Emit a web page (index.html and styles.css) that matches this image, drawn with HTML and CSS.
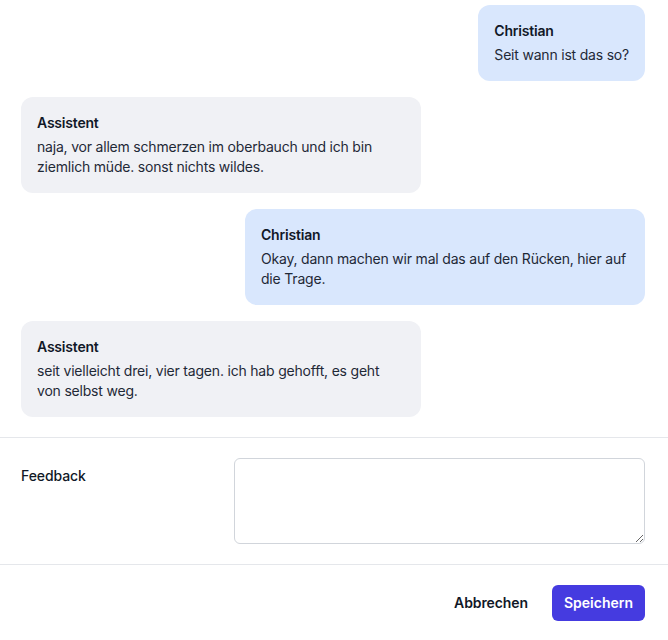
FILE: index.html
```html
<!DOCTYPE html>
<html lang="de">
<head>
<meta charset="utf-8">
<title>Feedback</title>
<link rel="stylesheet" href="styles.css">
</head>
<body>
<div class="panel">
  <div class="chat">
    <div class="msg msg-user">
      <div class="name">Christian</div>
      <div class="text">Seit wann ist das so?</div>
    </div>
    <div class="msg msg-bot">
      <div class="name">Assistent</div>
      <div class="text">naja, vor allem schmerzen im oberbauch und ich bin ziemlich müde. sonst nichts wildes.</div>
    </div>
    <div class="msg msg-user">
      <div class="name">Christian</div>
      <div class="text">Okay, dann machen wir mal das auf den Rücken, hier auf die Trage.</div>
    </div>
    <div class="msg msg-bot">
      <div class="name">Assistent</div>
      <div class="text">seit vielleicht drei, vier tagen. ich hab gehofft, es geht von selbst weg.</div>
    </div>
  </div>
  <div class="form-row">
    <label class="label" for="fb">Feedback</label>
    <textarea id="fb" class="input"></textarea>
  </div>
  <div class="actions">
    <button class="btn-text" type="button">Abbrechen</button>
    <button class="btn-primary" type="button">Speichern</button>
  </div>
</div>
</body>
</html>
```
FILE: styles.css
```css
* { box-sizing: border-box; }
html, body { margin: 0; padding: 0; background: #fff; }
body {
  font-family: Inter, "Noto Sans", "Liberation Sans", sans-serif;
  font-size: 14px;
  line-height: 20px;
  color: #1f2937;
}
.panel { width: 668px; }
.chat {
  display: flex;
  flex-direction: column;
  gap: 16px;
  padding: 5px 23px 20px 21px;
  border-bottom: 1px solid #e5e7eb;
}
.msg {
  max-width: 400px;
  padding: 16px;
  border-radius: 12px;
  letter-spacing: -0.2px;
}
.msg-user { align-self: flex-end; background: #d9e7fd; }
.msg-bot { align-self: flex-start; background: #f0f1f5; }
.name {
  font-weight: 600;
  color: #111827;
  margin-bottom: 4px;
}
.text { color: #1f2937; }
.form-row {
  display: grid;
  grid-template-columns: repeat(3, 1fr);
  column-gap: 16px;
  padding: 20px 23px 20px 21px;
  border-bottom: 1px solid #e5e7eb;
}
.label {
  padding-top: 6px;
  line-height: 24px;
  font-weight: 500;
  color: #111827;
  letter-spacing: -0.1px;
}
.input {
  grid-column: span 2;
  height: 86px;
  border: 1px solid #d1d5db;
  border-radius: 6px;
  font: inherit;
  padding: 6px 10px;
  resize: vertical;
}
.actions {
  display: flex;
  justify-content: flex-end;
  align-items: center;
  gap: 24px;
  padding: 20px 23px 0 21px;
}
.btn-text {
  border: 0;
  background: none;
  font: inherit;
  font-weight: 600;
  color: #111827;
  padding: 0;
  letter-spacing: -0.1px;
}
.btn-primary {
  border: 0;
  font: inherit;
  font-weight: 600;
  color: #fff;
  background: #453be0;
  border-radius: 6px;
  height: 36px;
  padding: 0 12px;
}
```
